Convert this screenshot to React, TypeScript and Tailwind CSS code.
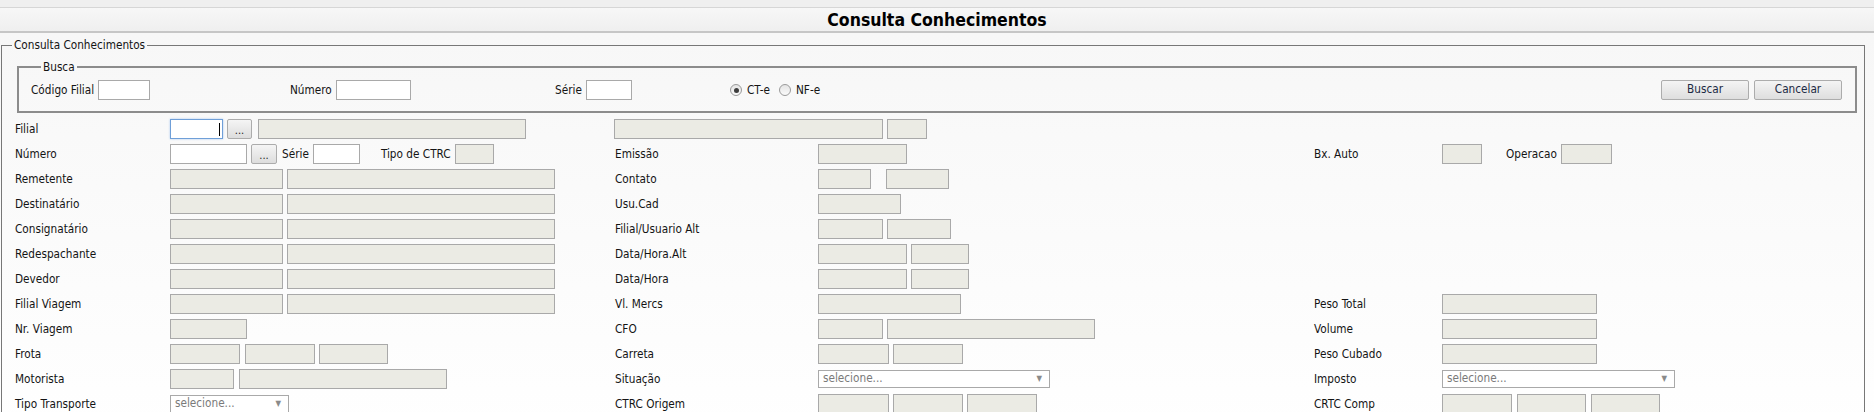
import React from "react";

type WP = { w: string };

const D = ({ w }: WP) => (
  <div className={`${w} h-[20px] shrink-0 border border-[#a9a9a9] bg-[#ebebe4]`} />
);

const W = ({ w }: WP) => (
  <div className={`${w} h-[20px] shrink-0 border border-[#a9a9a9] bg-white`} />
);

const Dots = ({ w }: WP) => (
  <div
    className={`${w} h-[20px] shrink-0 flex items-center justify-center border border-[#acacac] rounded-[2px] bg-linear-to-b from-[#f5f5f5] to-[#dddddd] text-[11px] leading-none text-[#222] pt-[3px]`}
  >
    ...
  </div>
);

const Sel = ({ w }: WP) => (
  <div
    className={`${w} h-[18px] mt-[1px] shrink-0 flex items-center justify-between border border-[#a9a9a9] bg-white pl-[4px] pr-[7px] text-[#7a7a7a]`}
  >
    <span className="leading-none">selecione...</span>
    <span className="text-[8px] leading-none text-[#8a8a8a]">▼</span>
  </div>
);

const L = ({ children }: { children?: React.ReactNode }) => (
  <div className="pl-[2px] h-[20px] leading-[20px] whitespace-nowrap">{children}</div>
);

const Row = ({ children }: { children: React.ReactNode }) => (
  <div className="flex items-start">{children}</div>
);

const T = ({ children, cls }: { children: React.ReactNode; cls: string }) => (
  <span className={`${cls} h-[20px] leading-[20px] whitespace-nowrap shrink-0`}>{children}</span>
);

const Radio = ({ checked }: { checked?: boolean }) => (
  <div className="w-[12px] h-[12px] rounded-full border border-[#9a9a9a] bg-linear-to-b from-[#e4e4e4] to-[#fafafa] flex items-center justify-center shrink-0">
    {checked && <div className="w-[5px] h-[5px] rounded-full bg-[#3d3d3d]" />}
  </div>
);

const Btn = ({ children }: { children: React.ReactNode }) => (
  <div className="w-[88px] h-[20px] flex items-center justify-center border border-[#acacac] rounded-[2px] bg-linear-to-b from-[#f4f4f4] to-[#dedede] text-[#1c2a44]">
    {children}
  </div>
);

export default function App() {
  return (
    <div className="w-[1874px] min-h-[412px] bg-white text-[#141414] text-[11.7px] [font-family:'DejaVu_Sans_Condensed','Liberation_Sans',sans-serif]">
      {/* header */}
      <div className="h-[8px] bg-[#efefef] border-b border-[#d6d6d6]" />
      <div className="h-[25px] bg-linear-to-b from-[#f7f7f7] to-[#efefef] border-b-2 border-[#c6c6c6]">
        <div className="h-[23px] pt-[1px] flex items-center justify-center font-bold text-[17.5px] text-black">
          Consulta Conhecimentos
        </div>
      </div>
      <div className="pt-[5px] bg-linear-to-b from-[#f7f7f7] to-white">
        <fieldset className="ml-[1px] mr-[9px] border border-[#777777] pb-[20px]">
          <legend className="ml-[10px] px-[2px] leading-[14px]">Consulta Conhecimentos</legend>

          {/* Busca */}
          <fieldset className="mt-[8px] ml-[15px] mr-[7px] border-2 border-[#8c8c8c] pt-[6px] pb-[11px] pl-[12px] pr-[13px]">
            <legend className="ml-[10px] px-[2px] leading-[14px]">Busca</legend>
            <div className="flex items-center h-[20px]">
              <div className="w-[259px] flex items-center">
                <T cls="">Código Filial</T>
                <div className="ml-[4px]"><W w="w-[52px]" /></div>
              </div>
              <div className="w-[265px] flex items-center">
                <T cls="">Número</T>
                <div className="ml-[4px]"><W w="w-[75px]" /></div>
              </div>
              <div className="w-[175px] flex items-center">
                <T cls="">Série</T>
                <div className="ml-[4px]"><W w="w-[46px]" /></div>
              </div>
              <div className="flex items-center">
                <Radio checked />
                <T cls="ml-[5px]">CT-e</T>
                <div className="ml-[9px]"><Radio /></div>
                <T cls="ml-[5px]">NF-e</T>
              </div>
              <div className="ml-auto flex gap-[5px]">
                <Btn>Buscar</Btn>
                <Btn>Cancelar</Btn>
              </div>
            </div>
          </fieldset>

          {/* main form */}
          <div className="mt-[6px] pl-[11px] grid grid-cols-[157px_443px_205px_494px_130px_1fr] auto-rows-[25px]">
            {/* row 0 */}
            <L>Filial</L>
            <Row>
              <div className="w-[53px] h-[20px] shrink-0 border border-[#6f9fd8] bg-white shadow-[0_0_2px_#a9c8ee] flex items-center justify-end pr-[2px]">
                <div className="w-[1px] h-[13px] bg-black" />
              </div>
              <div className="ml-[4px]"><Dots w="w-[25px]" /></div>
              <div className="ml-[6px]"><D w="w-[268px]" /></div>
            </Row>
            <div className="col-span-2 pl-[1px]">
              <Row>
                <D w="w-[269px]" />
                <div className="ml-[4px]"><D w="w-[40px]" /></div>
              </Row>
            </div>
            <div />
            <div />

            {/* row 1 */}
            <L>Número</L>
            <Row>
              <W w="w-[77px]" />
              <div className="ml-[4px]"><Dots w="w-[26px]" /></div>
              <T cls="ml-[5px]">Série</T>
              <div className="ml-[4px]"><W w="w-[47px]" /></div>
              <T cls="ml-[21px]">Tipo de CTRC</T>
              <div className="ml-[4px]"><D w="w-[39px]" /></div>
            </Row>
            <L>Emissão</L>
            <Row><D w="w-[89px]" /></Row>
            <L>Bx. Auto</L>
            <Row>
              <D w="w-[40px]" />
              <T cls="ml-[24px]">Operacao</T>
              <div className="ml-[4px]"><D w="w-[51px]" /></div>
            </Row>

            {/* row 2 */}
            <L>Remetente</L>
            <Row><D w="w-[113px]" /><div className="ml-[4px]"><D w="w-[268px]" /></div></Row>
            <L>Contato</L>
            <Row><D w="w-[53px]" /><div className="ml-[15px]"><D w="w-[63px]" /></div></Row>
            <div />
            <div />

            {/* row 3 */}
            <L>Destinatário</L>
            <Row><D w="w-[113px]" /><div className="ml-[4px]"><D w="w-[268px]" /></div></Row>
            <L>Usu.Cad</L>
            <Row><D w="w-[83px]" /></Row>
            <div />
            <div />

            {/* row 4 */}
            <L>Consignatário</L>
            <Row><D w="w-[113px]" /><div className="ml-[4px]"><D w="w-[268px]" /></div></Row>
            <L>Filial/Usuario Alt</L>
            <Row><D w="w-[65px]" /><div className="ml-[4px]"><D w="w-[64px]" /></div></Row>
            <div />
            <div />

            {/* row 5 */}
            <L>Redespachante</L>
            <Row><D w="w-[113px]" /><div className="ml-[4px]"><D w="w-[268px]" /></div></Row>
            <L>Data/Hora.Alt</L>
            <Row><D w="w-[89px]" /><div className="ml-[4px]"><D w="w-[58px]" /></div></Row>
            <div />
            <div />

            {/* row 6 */}
            <L>Devedor</L>
            <Row><D w="w-[113px]" /><div className="ml-[4px]"><D w="w-[268px]" /></div></Row>
            <L>Data/Hora</L>
            <Row><D w="w-[89px]" /><div className="ml-[4px]"><D w="w-[58px]" /></div></Row>
            <div />
            <div />

            {/* row 7 */}
            <L>Filial Viagem</L>
            <Row><D w="w-[113px]" /><div className="ml-[4px]"><D w="w-[268px]" /></div></Row>
            <L>Vl. Mercs</L>
            <Row><D w="w-[143px]" /></Row>
            <L>Peso Total</L>
            <Row><D w="w-[155px]" /></Row>

            {/* row 8 */}
            <L>Nr. Viagem</L>
            <Row><D w="w-[77px]" /></Row>
            <L>CFO</L>
            <Row><D w="w-[65px]" /><div className="ml-[4px]"><D w="w-[208px]" /></div></Row>
            <L>Volume</L>
            <Row><D w="w-[155px]" /></Row>

            {/* row 9 */}
            <L>Frota</L>
            <Row>
              <D w="w-[70px]" />
              <div className="ml-[5px]"><D w="w-[70px]" /></div>
              <div className="ml-[4px]"><D w="w-[69px]" /></div>
            </Row>
            <L>Carreta</L>
            <Row><D w="w-[71px]" /><div className="ml-[4px]"><D w="w-[70px]" /></div></Row>
            <L>Peso Cubado</L>
            <Row><D w="w-[155px]" /></Row>

            {/* row 10 */}
            <L>Motorista</L>
            <Row><D w="w-[64px]" /><div className="ml-[5px]"><D w="w-[208px]" /></div></Row>
            <L>Situação</L>
            <Row><Sel w="w-[232px]" /></Row>
            <L>Imposto</L>
            <Row><Sel w="w-[233px]" /></Row>

            {/* row 11 */}
            <L>Tipo Transporte</L>
            <Row><Sel w="w-[119px]" /></Row>
            <L>CTRC Origem</L>
            <Row>
              <D w="w-[71px]" />
              <div className="ml-[4px]"><D w="w-[70px]" /></div>
              <div className="ml-[4px]"><D w="w-[70px]" /></div>
            </Row>
            <L>CRTC Comp</L>
            <Row>
              <D w="w-[70px]" />
              <div className="ml-[5px]"><D w="w-[69px]" /></div>
              <div className="ml-[5px]"><D w="w-[69px]" /></div>
            </Row>
          </div>
        </fieldset>
      </div>
    </div>
  );
}
